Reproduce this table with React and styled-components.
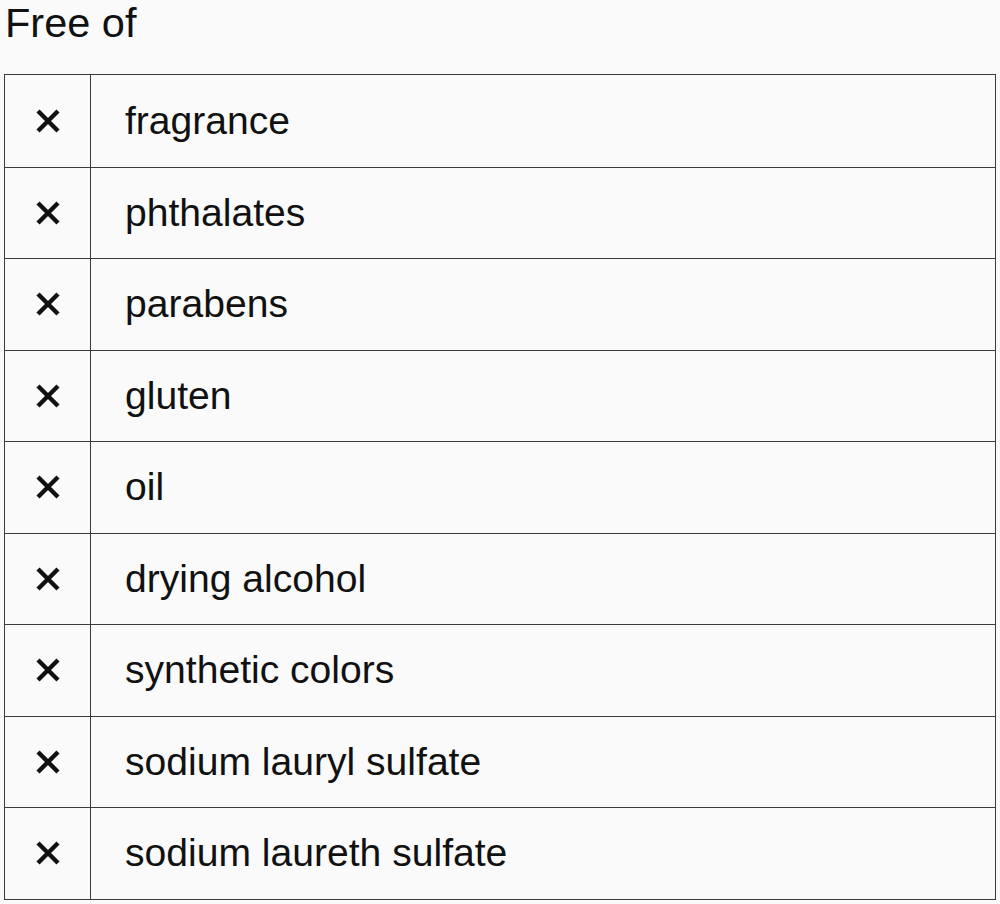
import React from 'react';
import styled, { createGlobalStyle } from 'styled-components';

const GlobalStyle = createGlobalStyle`
  html, body {
    margin: 0;
    padding: 0;
    background: #fafafa;
  }

  body {
    font-family: "Liberation Sans", Arial, sans-serif;
    color: #111;
  }
`;

const Page = styled.div`
  padding: 0 4px 6px 4px;
  width: 992px;
`;

const Title = styled.h2`
  margin: 0 0 28px 1px;
  font-size: 41.5px;
  font-weight: normal;
  line-height: 46px;
  color: #111;
`;

const List = styled.div`
  border: 1px solid #3a3a3a;
  border-right-width: 1.5px;
  display: flex;
  flex-direction: column;
`;

const Row = styled.div`
  display: grid;
  grid-template-columns: 86px 1fr;
  height: 91.5px;
  box-sizing: border-box;
  border-top: ${props => (props.first ? 'none' : '1px solid #3a3a3a')};
`;

const MarkCell = styled.div`
  display: flex;
  align-items: center;
  justify-content: center;
  border-right: 1px solid #3a3a3a;
`;

const LabelCell = styled.div`
  display: flex;
  align-items: center;
  padding-left: 34px;
  font-size: 39.1px;
  color: #111;
`;

const Cross = () => (
  <svg width="26" height="26" viewBox="0 0 26 26" aria-hidden="true">
    <path d="M3 3 L23 23 M23 3 L3 23" stroke="#111" strokeWidth="4.4" strokeLinecap="butt" />
  </svg>
);

const items = [
  'fragrance',
  'phthalates',
  'parabens',
  'gluten',
  'oil',
  'drying alcohol',
  'synthetic colors',
  'sodium lauryl sulfate',
  'sodium laureth sulfate',
];

const App = () => (
  <Page>
    <GlobalStyle />
    <Title>Free of</Title>
    <List>
      {items.map((item, i) => (
        <Row key={item} first={i === 0}>
          <MarkCell>
            <Cross />
          </MarkCell>
          <LabelCell>{item}</LabelCell>
        </Row>
      ))}
    </List>
  </Page>
);

export default App;
